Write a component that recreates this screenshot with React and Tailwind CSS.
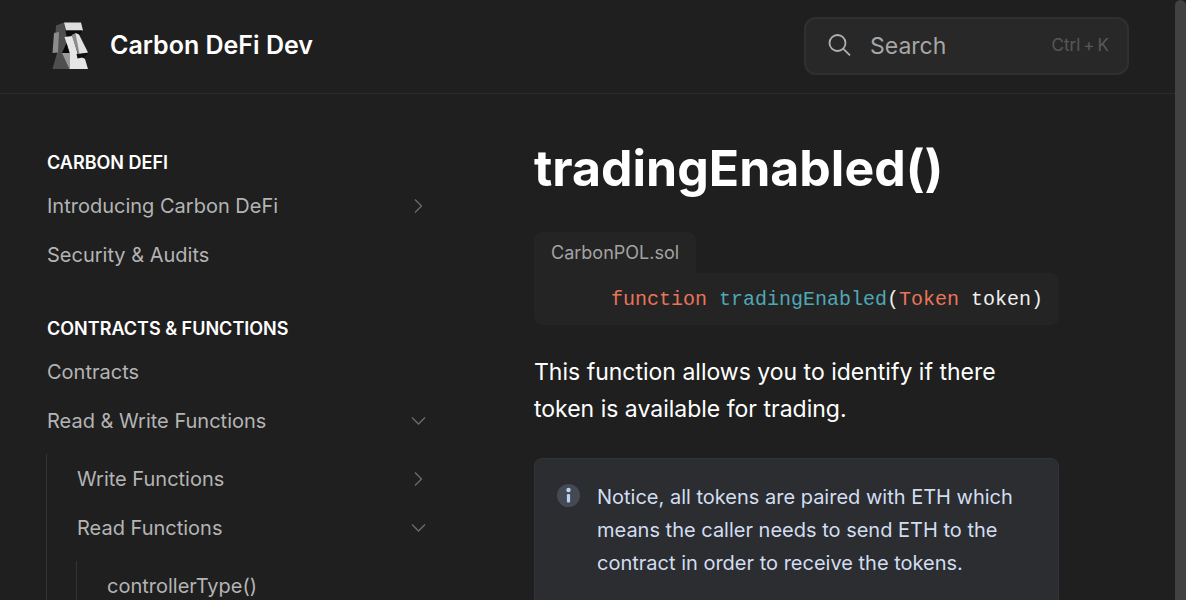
import { useState } from "react";

function Logo() {
  return (
    <svg viewBox="0 0 38 48" className="h-12 w-[38px] shrink-0" aria-hidden="true">
      <path d="M13 0.500 L5 3.500 L4.500 12 L6 31 L1.500 47 H19 L20 30 L15 13 Z" fill="#4f4f4f" />
      <path d="M3 11 L8 10 L7 30.500 L1.500 31 Z" fill="#8c8c8c" />
      <path d="M13 0.500 H30 L32 8.500 H15 Z" fill="#dedede" />
      <path d="M15 8.500 H31 L29 13 L16 15 Z" fill="#0c0c0c" />
      <path d="M13.500 15 L21.500 14 L27 33 L34 37 L37 47 H18.500 V30 Z" fill="#e6e6e6" />
      <path d="M11 31 L15.500 21 L18.500 31 Z" fill="#060606" />
      <path d="M11 31 H18.500 V47 Z" fill="#9a9a9a" />
      <path d="M20.500 13 L25 11 L30 31.500 L27.500 33 Z" fill="#8d8d8d" />
      <path d="M24.500 11 L28 12.500 L37 30.500 L28.500 32 Z" fill="#e2e2e2" />
      <path d="M25.500 32 L37 31 L34 35 L26.500 36.500 Z" fill="#101010" />
    </svg>
  );
}

function Chevron({ open }) {
  return (
    <svg
      viewBox="0 0 16 16"
      className="h-4 w-4 shrink-0"
      fill="none"
      stroke="#6c6c6c"
      strokeWidth="1.3"
      aria-hidden="true"
    >
      {open ? <path d="M2 4.500 L8.500 11 L15 4.500" /> : <path d="M5 1.500 L11.500 8 L5 14.500" />}
    </svg>
  );
}

function NavLink({ children }) {
  return (
    <a href="#" className="flex h-[49px] items-center text-xl text-[#b4b4b4] hover:text-white">
      {children}
    </a>
  );
}

function NavGroup({ label, initiallyOpen = false, children }) {
  const [open, setOpen] = useState(initiallyOpen);
  return (
    <div>
      <button
        type="button"
        aria-expanded={open}
        onClick={() => setOpen(!open)}
        className="flex h-[49px] w-full items-center justify-between text-xl text-[#b4b4b4] hover:text-white"
      >
        {label}
        <Chevron open={open} />
      </button>
      {open && children ? (
        <div className="-ml-px mt-[9px] border-l border-[#343434] pl-[30px]">{children}</div>
      ) : null}
    </div>
  );
}

function NavHeading({ children }) {
  return (
    <h2 className="flex h-[38px] items-end pb-1 text-lg font-semibold uppercase text-white">
      {children}
    </h2>
  );
}

function Header() {
  return (
    <header className="flex h-[94px] shrink-0 items-center justify-between border-b border-[#2a2a2a] pb-px pl-[51px] pr-[46px]">
      <a href="#" className="flex items-center gap-[21px] text-[25px] font-semibold text-white">
        <Logo />
        Carbon DeFi Dev
      </a>
      <label className="flex h-[58px] w-[325px] items-center rounded-xl border-2 border-[#303030] bg-[#282828] pl-[22px] pr-[18px] text-[23px]">
        <svg
          viewBox="0 0 24 24"
          className="h-6 w-6 shrink-0"
          fill="none"
          stroke="#b0b0b0"
          strokeWidth="1.8"
          aria-hidden="true"
        >
          <circle cx="9.500" cy="9" r="8" />
          <path d="M15.300 14.800 L22 21.300" />
        </svg>
        <input
          type="search"
          aria-label="Search"
          placeholder="Search"
          className="ml-[18px] w-0 min-w-0 flex-1 bg-transparent outline-none placeholder:text-[#a6a6a6]"
        />
        <span className="flex gap-[3px] text-[17px] text-[#585858]">
          <span>Ctrl</span>
          <span>+</span>
          <span>K</span>
        </span>
      </label>
    </header>
  );
}

function Sidebar() {
  return (
    <nav className="w-[426px] shrink-0 pl-[47px] pt-[49px]" aria-label="Documentation">
      <NavHeading>Carbon DeFi</NavHeading>
      <NavGroup label="Introducing Carbon DeFi" />
      <NavLink>Security &amp; Audits</NavLink>
      <div className="mt-[30px]">
        <NavHeading>Contracts &amp; Functions</NavHeading>
        <NavLink>Contracts</NavLink>
        <NavGroup label="Read & Write Functions" initiallyOpen>
          <NavGroup label="Write Functions" />
          <NavGroup label="Read Functions" initiallyOpen>
            <NavLink>controllerType()</NavLink>
          </NavGroup>
        </NavGroup>
      </div>
    </nav>
  );
}

function Article() {
  return (
    <main className="min-w-0 flex-1 pl-[108px] pr-[116px] pt-[42px]">
      <h1 className="text-[50px] font-bold leading-[64px] text-white">tradingEnabled()</h1>
      <figure className="mt-8">
        <figcaption className="flex h-[41px] w-fit items-center rounded-t-lg bg-[#242424] px-[17px] text-lg text-[#a3a3a3]">
          CarbonPOL.sol
        </figcaption>
        <pre className="flex h-[52px] items-center overflow-hidden rounded-lg rounded-tl-none bg-[#242424] pl-[29px] pt-[2px] font-['Liberation_Mono',monospace] text-xl text-[#f0f0f0]">
          <code className="font-['Liberation_Mono',monospace]">
            {"    "}
            <span className="text-[#e8745a]">function</span>{" "}
            <span className="text-[#4fa8b5]">tradingEnabled</span>(
            <span className="text-[#e8745a]">Token</span> token)
          </code>
        </pre>
      </figure>
      <p className="mt-[29px] text-[23px] leading-[37px] text-white">
        This function allows you to identify if there token is available for trading.
      </p>
      <aside className="mt-[30px] flex min-h-[180px] gap-[17px] rounded-lg border border-[#30353a] bg-[#2b2d30] px-[21px] pt-[22px]">
        <svg viewBox="0 0 24 24" className="mt-[2px] h-6 w-6 shrink-0" aria-hidden="true">
          <circle cx="12.500" cy="12.500" r="11.500" fill="#444a54" />
          <circle cx="12.500" cy="7" r="2.200" fill="#bdd3f6" />
          <rect x="10.900" y="11" width="3.200" height="8.500" rx="1.300" fill="#bdd3f6" />
        </svg>
        <p className="text-xl leading-[33px] text-[#d3ddf0]">
          Notice, all tokens are paired with ETH which means the caller needs to send ETH to the
          contract in order to receive the tokens.
        </p>
      </aside>
    </main>
  );
}

export default function App() {
  return (
    <div className="flex h-screen overflow-hidden bg-[#1f1f1f] font-['Inter',sans-serif] antialiased">
      <div className="flex min-w-0 flex-1 flex-col overflow-hidden">
        <Header />
        <div className="flex min-h-0 flex-1 overflow-hidden">
          <Sidebar />
          <Article />
        </div>
      </div>
      <div className="w-[11px] shrink-0 rounded-t-full bg-[#424242]" aria-hidden="true" />
    </div>
  );
}
